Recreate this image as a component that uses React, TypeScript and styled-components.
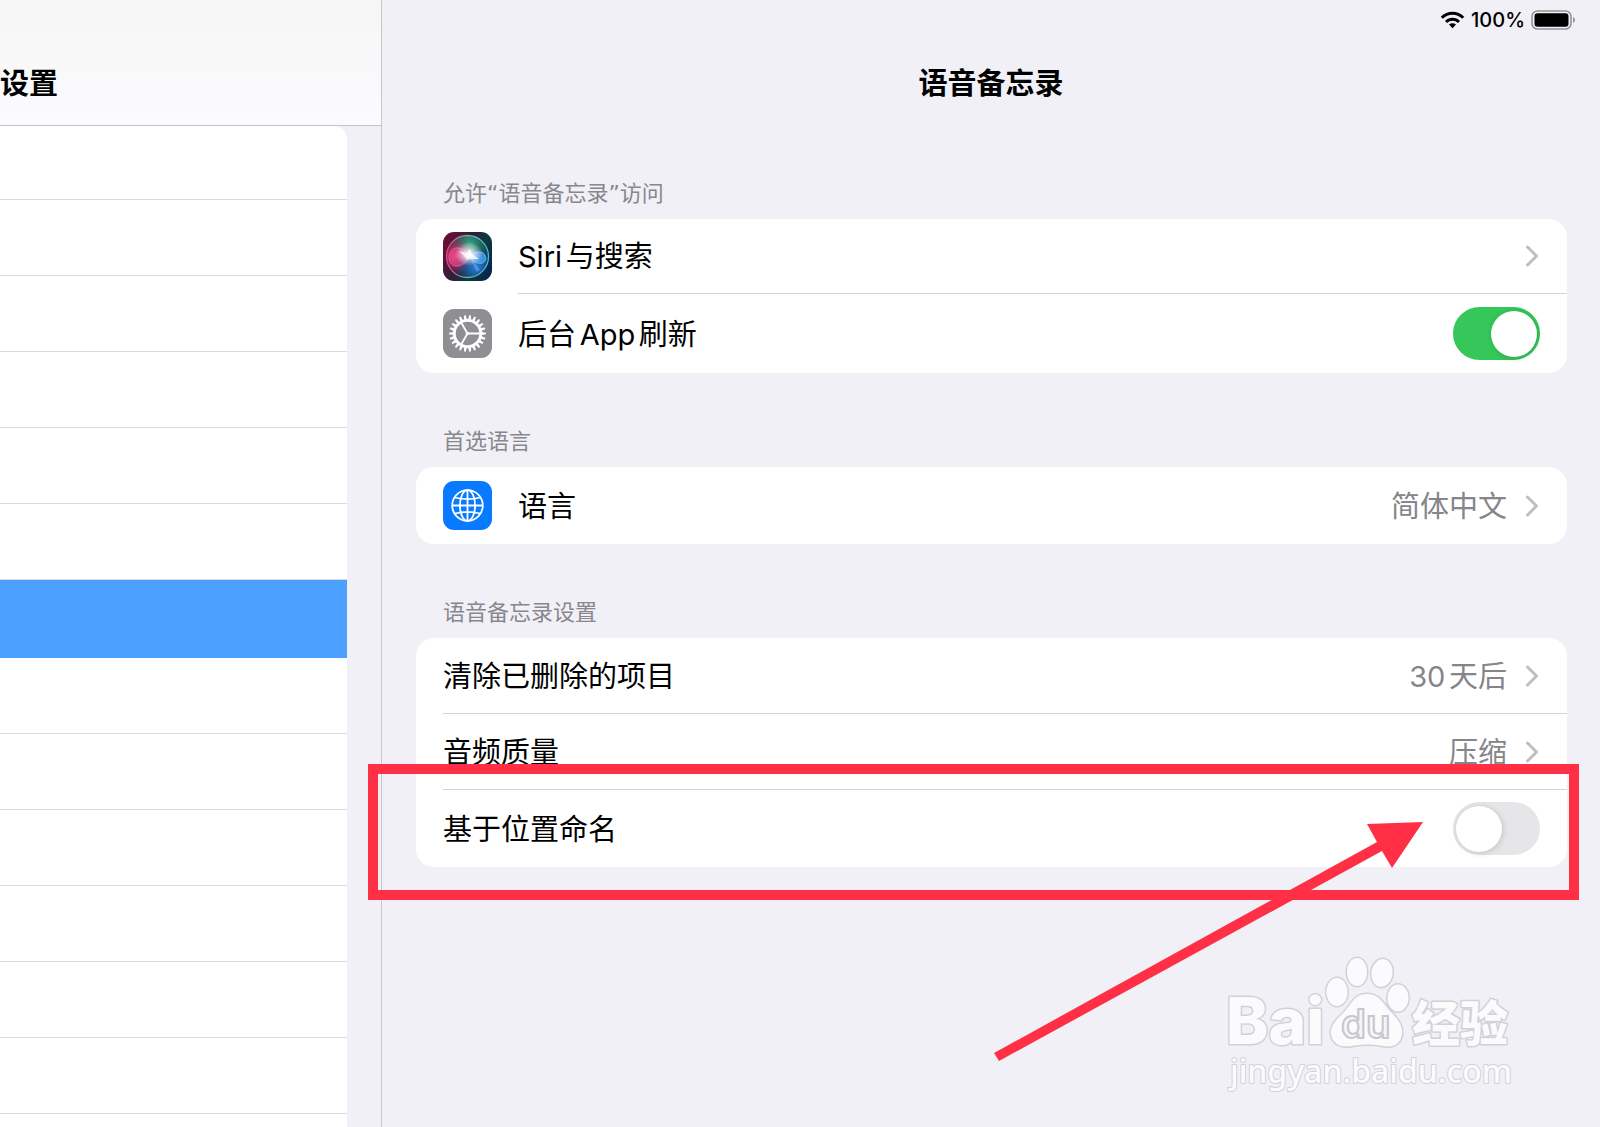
import React, { useState } from "react";
import styled, { createGlobalStyle } from "styled-components";

const GlobalStyle = createGlobalStyle`
  *, *::before, *::after { box-sizing: border-box; }
  body {
    margin: 0;
    background: #f1f0f7;
    color: #000;
    font-family: Inter, "Noto Sans CJK SC", sans-serif;
    text-autospace: normal;
  }
`;

const Screen = styled.div`
  display: flex;
  height: 100vh;
  overflow: hidden;
`;

const Sidebar = styled.aside`
  display: flex;
  flex-direction: column;
  flex: 0 0 382px;
  border-right: 1px solid #c8c7cd;
`;

const SidebarHeader = styled.header`
  flex: 0 0 126px;
  padding-top: 64px;
  border-bottom: 1px solid #c4c4c9;
  background: linear-gradient(to bottom, #f6f6f7, #fbfbfd);
`;

const Title = styled.h1`
  margin: 0;
  font-size: 29px;
  line-height: 40px;
  font-weight: 600;
`;

const SidebarList = styled.ul`
  flex: 1;
  min-height: 0;
  margin: 0 34px 0 0;
  padding: 0;
  overflow: hidden;
  list-style: none;
  background: #fff;
  border-top-right-radius: 14px;
`;

const SidebarItem = styled.li<{ $selected?: boolean }>`
  height: ${(p) => (p.$selected ? 78 : 76)}px;
  border-bottom: 1px solid ${(p) => (p.$selected ? "#4ca0ff" : "#dbdbdd")};
  background: ${(p) => (p.$selected ? "#4ca0ff" : "#fff")};

  &:first-child { height: 74px; }
`;

const Detail = styled.main`
  position: relative;
  flex: 1;
  min-width: 0;
`;

const StatusBar = styled.div`
  display: flex;
  align-items: center;
  justify-content: flex-end;
  gap: 6px;
  height: 40px;
  padding-right: 24px;
  font-size: 20px;
  line-height: 40px;
  font-weight: 500;
`;

const DetailHeader = styled.header`
  height: 86px;
  padding-top: 24px;
  text-align: center;
`;

const Sections = styled.div`
  display: flex;
  flex-direction: column;
  gap: 54px;
  padding: 53px 33px 0 34px;
`;

const SectionLabel = styled.h2`
  margin: 0 0 10px;
  padding-left: 27px;
  font-family: "DejaVu Sans", "Noto Sans CJK SC", sans-serif;
  font-size: 22px;
  line-height: 30px;
  font-weight: 400;
  color: #88878d;
`;

const Card = styled.div`
  position: relative;
  background: #fff;
  border-radius: 18px;
`;

const Row = styled.div<{ $height: number }>`
  display: flex;
  align-items: center;
  gap: 26px;
  width: 100%;
  height: ${(p) => p.$height}px;
  padding: 0 0 0 27px;
  border: 0;
  background: none;
  color: inherit;
  font: inherit;
  font-size: 29px;
  line-height: 40px;
  text-align: left;
`;

const RowBody = styled.span<{ $divided?: boolean }>`
  display: flex;
  align-items: center;
  flex: 1;
  gap: 18px;
  height: 100%;
  padding-right: 27px;
  border-bottom: ${(p) => (p.$divided ? "1px solid #d3d3d6" : "0")};
`;

const RowName = styled.span`
  flex: 1;
  padding-top: 2px;
`;

const RowValue = styled.span`
  padding-top: 2px;
  color: #85858a;
`;

const ToggleInput = styled.input`
  appearance: none;
  display: flex;
  align-items: center;
  width: 87px;
  height: 53px;
  margin: 0;
  padding: 3px;
  border-radius: 27px;
  background: #e6e6e8;
  cursor: pointer;

  &::before {
    content: "";
    width: 46px;
    height: 46px;
    border-radius: 50%;
    background: #fff;
    box-shadow: 1px 1px 6px rgba(0, 0, 0, 0.16);
  }

  &:checked {
    justify-content: flex-end;
    background: #35c759;
  }
`;

const IconSvg = styled.svg`
  display: block;
  flex: none;
`;

const HighlightFrame = styled.div`
  position: absolute;
  top: 126px;
  left: -48px;
  right: -12px;
  height: 136px;
  border: 10px solid #ff3045;
  pointer-events: none;
`;

const ArrowMark = styled.svg`
  position: absolute;
  top: 180px;
  right: 141px;
  pointer-events: none;
`;

const Watermark = styled.svg`
  position: absolute;
  right: 78px;
  bottom: 27px;
  pointer-events: none;
`;

function SiriIcon() {
  return (
    <IconSvg width="49" height="49" viewBox="0 0 49 49" aria-hidden="true">
      <defs>
        <linearGradient id="siriBase" x1="0" y1="0.2" x2="1" y2="0.7">
          <stop offset="0" stopColor="#6e0c37" />
          <stop offset="0.45" stopColor="#2c1f3d" />
          <stop offset="0.7" stopColor="#0b3a3c" />
          <stop offset="1" stopColor="#06264d" />
        </linearGradient>
        <radialGradient id="siriGreen" cx="0.55" cy="0.2" r="0.5">
          <stop offset="0" stopColor="#2fae86" stopOpacity="0.95" />
          <stop offset="1" stopColor="#2fae86" stopOpacity="0" />
        </radialGradient>
        <radialGradient id="siriPink" cx="0.2" cy="0.5" r="0.45">
          <stop offset="0" stopColor="#f03a7c" />
          <stop offset="1" stopColor="#d02a70" stopOpacity="0" />
        </radialGradient>
        <radialGradient id="siriBlue" cx="0.7" cy="0.75" r="0.5">
          <stop offset="0" stopColor="#2c85e4" />
          <stop offset="1" stopColor="#1a55b0" stopOpacity="0" />
        </radialGradient>
        <radialGradient id="siriGlow">
          <stop offset="0" stopColor="#fff" />
          <stop offset="0.3" stopColor="#fff" stopOpacity="0.75" />
          <stop offset="1" stopColor="#fff" stopOpacity="0" />
        </radialGradient>
        <linearGradient id="siriRing" x1="0" y1="0.5" x2="1" y2="0.5">
          <stop offset="0" stopColor="#e0487c" />
          <stop offset="0.5" stopColor="#66b59d" />
          <stop offset="1" stopColor="#4bb7d8" />
        </linearGradient>
      </defs>
      <rect width="49" height="49" rx="11" fill="url(#siriBase)" />
      <circle cx="24.5" cy="24.5" r="21" fill="url(#siriGreen)" />
      <circle cx="24.5" cy="24.5" r="21" fill="url(#siriPink)" />
      <circle cx="24.5" cy="24.5" r="21" fill="url(#siriBlue)" />
      <path d="M27 24C20 13 7 13 6 25C6 37 20 38 27 24Z" fill="#f24f92" fillOpacity="0.5" stroke="#ff7eb0" strokeOpacity="0.7" strokeWidth="0.7" />
      <path d="M26 25C32 18 42 18 43 26C43 33 33 34 26 25Z" fill="#49a7f5" fillOpacity="0.75" stroke="#8fd9ff" strokeOpacity="0.7" strokeWidth="0.7" />
      <path d="M26 24L37 38L34 40Z" fill="#8eb7f5" fillOpacity="0.4" />
      <ellipse cx="26" cy="22" rx="14" ry="12" fill="url(#siriGlow)" />
      <path d="M16 19L24 21L27 17L29 22L36 27L27 27L24 28L22 25Z" fill="#fff" fillOpacity="0.7" />
      <circle cx="24.5" cy="24.5" r="21" fill="none" stroke="url(#siriRing)" strokeWidth="1.3" />
    </IconSvg>
  );
}

const TEETH = Array.from({ length: 22 }, (_, i) => (i * 360) / 22);

function GearIcon() {
  return (
    <IconSvg width="49" height="49" viewBox="0 0 49 49" aria-hidden="true">
      <rect width="49" height="49" rx="11" fill="#8e8e93" />
      <g transform="translate(24.5 24.5)" stroke="#fff" fill="none">
        <circle r="13.2" strokeWidth="2.8" />
        {TEETH.map((a) => (
          <path key={a} d="M14 -1.5L18.4 -0.8V0.8L14 1.5Z" fill="#fff" stroke="none" transform={`rotate(${a})`} />
        ))}
        <path d="M0 0H13M0 0L-6.5 -11.3M0 0L-6.5 11.3" strokeWidth="1.8" />
        <circle r="1.8" fill="#fff" stroke="none" />
      </g>
    </IconSvg>
  );
}

function GlobeIcon() {
  return (
    <IconSvg width="49" height="49" viewBox="0 0 49 49" aria-hidden="true">
      <rect width="49" height="49" rx="11" fill="#087aff" />
      <g transform="translate(24.5 24.5)" stroke="#fff" strokeWidth="1.8" fill="none">
        <circle r="15.3" />
        <ellipse rx="7.6" ry="15.3" />
        <path d="M0 -15.3V15.3M-15.3 0H15.3M-12.8 -8Q0 -4.6 12.8 -8M-12.8 8Q0 4.6 12.8 8" />
      </g>
    </IconSvg>
  );
}

function Chevron() {
  return (
    <IconSvg width="15" height="22" viewBox="0 0 15 22" aria-hidden="true">
      <path d="M2.5 2L11.5 11L2.5 20" fill="none" stroke="#bfbfc3" strokeWidth="3" strokeLinecap="round" strokeLinejoin="round" />
    </IconSvg>
  );
}

function WifiIcon() {
  return (
    <IconSvg width="25" height="18" viewBox="0 0 25 18" aria-hidden="true">
      <g fill="none" stroke="#000" strokeWidth="3">
        <path d="M1.8 6.8C8 0.6 17 0.6 23.2 6.8" />
        <path d="M6 11C9.8 7.2 15.2 7.2 19 11" />
      </g>
      <path d="M12.5 17.2L9 13.6C11 11.9 14 11.9 16 13.6Z" fill="#000" />
    </IconSvg>
  );
}

function BatteryIcon() {
  return (
    <IconSvg width="45" height="20" viewBox="0 0 45 20" aria-hidden="true">
      <rect x="1" y="1" width="39" height="18" rx="5.5" fill="none" stroke="#949398" strokeWidth="1.6" />
      <rect x="3.5" y="3.3" width="34" height="13.4" rx="3" fill="#000" />
      <path d="M42 7C44.6 8 44.6 12 42 13Z" fill="#949398" />
    </IconSvg>
  );
}

interface LinkRowProps {
  name: string;
  value?: string;
  icon?: React.ReactNode;
  height?: number;
  divided?: boolean;
}

function LinkRow({ name, value, icon, height = 76, divided }: LinkRowProps) {
  return (
    <Row as="button" type="button" $height={height}>
      {icon}
      <RowBody $divided={divided}>
        <RowName>{name}</RowName>
        {value && <RowValue>{value}</RowValue>}
        <Chevron />
      </RowBody>
    </Row>
  );
}

interface ToggleRowProps {
  id: string;
  name: string;
  icon?: React.ReactNode;
  height?: number;
  initial: boolean;
}

function ToggleRow({ id, name, icon, height = 76, initial }: ToggleRowProps) {
  const [on, setOn] = useState(initial);
  return (
    <Row $height={height}>
      {icon}
      <RowBody>
        <RowName as="label" htmlFor={id}>{name}</RowName>
        <ToggleInput id={id} type="checkbox" role="switch" checked={on} onChange={(e) => setOn(e.target.checked)} />
      </RowBody>
    </Row>
  );
}

function BaiduMark() {
  return (
    <Watermark width="300" height="150" viewBox="0 0 300 150">
      <g fill="#fbfbfe" stroke="#d2d1d7" strokeWidth="3" paintOrder="stroke" strokeLinejoin="round">
        <text x="4" y="94" fontFamily="Inter" fontWeight="800" fontSize="64">Bai</text>
        <ellipse cx="115" cy="42" rx="10.5" ry="14" />
        <ellipse cx="135" cy="22" rx="10" ry="14" />
        <ellipse cx="160" cy="23" rx="10.5" ry="14" transform="rotate(8 160 23)" />
        <ellipse cx="176" cy="48" rx="10.5" ry="13.5" />
        <path d="M145 44C158 44 162 55 169 62C176 69 181 76 180 84C179 94 171 98 161 96C150 94 141 94 130 96C119 98 110 94 109 84C108 75 115 69 122 62C129 55 132 44 145 44Z" />
        <text x="190" y="91" fontFamily="Noto Sans CJK SC" fontWeight="900" fontSize="48">经验</text>
        <text x="8" y="133" fontFamily="Noto Sans" fontWeight="500" fontSize="32" strokeWidth="2">jingyan.baidu.com</text>
      </g>
      <text x="119" y="88" fontFamily="Inter" fontWeight="600" fontSize="40" fill="#f6f6fa" stroke="#c8c7cd" strokeWidth="2">du</text>
    </Watermark>
  );
}

export default function App() {
  return (
    <>
      <GlobalStyle />
      <Screen>
        <Sidebar>
          <SidebarHeader>
            <Title>设置</Title>
          </SidebarHeader>
          <SidebarList>
            {Array.from({ length: 14 }, (_, i) => (
              <SidebarItem key={i} $selected={i === 6} />
            ))}
          </SidebarList>
        </Sidebar>
        <Detail>
          <StatusBar>
            <WifiIcon />
            <span>100%</span>
            <BatteryIcon />
          </StatusBar>
          <DetailHeader>
            <Title>语音备忘录</Title>
          </DetailHeader>
          <Sections>
            <section>
              <SectionLabel>允许“语音备忘录”访问</SectionLabel>
              <Card>
                <LinkRow name="Siri与搜索" icon={<SiriIcon />} height={75} divided />
                <ToggleRow id="refresh" name="后台App刷新" icon={<GearIcon />} height={79} initial />
              </Card>
            </section>
            <section>
              <SectionLabel>首选语言</SectionLabel>
              <Card>
                <LinkRow name="语言" value="简体中文" icon={<GlobeIcon />} height={77} />
              </Card>
            </section>
            <section>
              <SectionLabel>语音备忘录设置</SectionLabel>
              <Card>
                <LinkRow name="清除已删除的项目" value="30天后" divided />
                <LinkRow name="音频质量" value="压缩" divided />
                <ToggleRow id="location" name="基于位置命名" height={77} initial={false} />
                <HighlightFrame />
                <ArrowMark width="436" height="247" viewBox="0 0 436 247" aria-hidden="true">
                  <path d="M4 235L387 24L377 6L433 4L402 50L392 33L9 243Z" fill="#ff3045" />
                </ArrowMark>
              </Card>
            </section>
          </Sections>
          <BaiduMark />
        </Detail>
      </Screen>
    </>
  );
}
